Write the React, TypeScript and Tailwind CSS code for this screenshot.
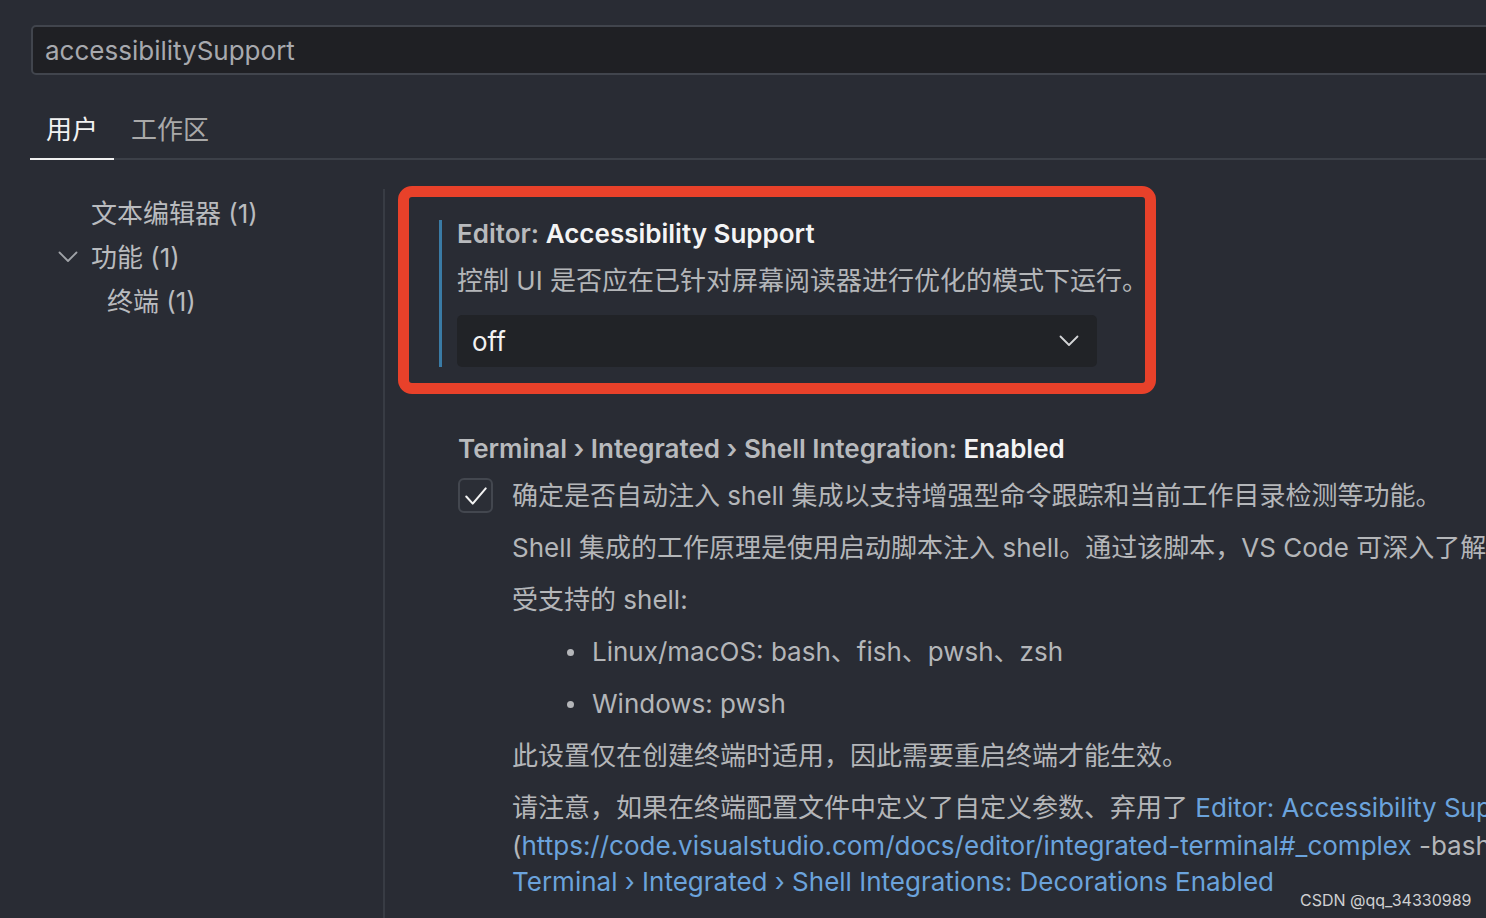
import React from 'react'

const FONT = 'font-["Inter","Noto_Sans_CJK_SC",sans-serif]'

function Chevron({ className }: { className?: string }) {
  return (
    <svg viewBox="0 0 20 12" fill="none" className={className}>
      <path d="M1.5 1.5 L10 10 L18.5 1.5" stroke="currentColor" strokeWidth="1.8" strokeLinecap="round" strokeLinejoin="round" />
    </svg>
  )
}

const TREE = [
  { label: '文本编辑器 (1)', pad: 'pl-[91px]', chevron: false },
  { label: '功能 (1)', pad: 'pl-[58px]', chevron: true },
  { label: '终端 (1)', pad: 'pl-[107px]', chevron: false }
]

export default function App() {
  return (
    <div className={`relative h-[918px] w-[1486px] overflow-hidden bg-[#292c34] ${FONT}`}>
      {/* Search */}
      <div className="pl-[31px] pt-[25px]">
        <div className="flex h-[50px] w-[1500px] items-center rounded-[5px] border-2 border-[#41454d] bg-[#1f2024] pl-[12px] text-[26px] text-[#a7a9ae]">
          accessibilitySupport
        </div>
      </div>

      {/* Tabs */}
      <div className="mt-[33px] flex pl-[30px]">
        <div className="flex h-[52px] w-[84px] items-center justify-center border-b-2 border-[#f0f0f0] pb-[8px] text-[26px] text-[#f2f2f2]">
          用户
        </div>
        <div className="flex h-[52px] flex-1 items-center border-b-2 border-[#3c4048] pb-[8px] pl-[17px] text-[26px] text-[#a9a9a9]">
          工作区
        </div>
      </div>

      <div className="flex">
        {/* Tree */}
        <div className="w-[383px] shrink-0 pt-[31px]">
          {TREE.map((item) => (
            <div key={item.label} className={`flex h-[44px] items-center ${item.pad} text-[26px] text-[#b9bbbe]`}>
              {item.chevron && <Chevron className="mr-[13px] h-[12px] w-[20px] text-[#a0a3a8]" />}
              {item.label}
            </div>
          ))}
        </div>

        {/* Settings list */}
        <div className="mt-[29px] h-[760px] border-l-2 border-[#383c44] pl-[13px]">
          <div className="-mt-[3px] w-[758px] rounded-[14px] border-[11px] border-[#e8412a] pb-[16px] pl-[30px] pt-[23px]">
            <div className="border-l-[3px] border-[#3a7ba5] pl-[15px]">
              <div className="text-[26px] font-semibold leading-[28px]">
                <span className="text-[#b8babd]">Editor: </span>
                <span className="text-[#f4f4f4]">Accessibility Support</span>
              </div>
              <div className="mt-[19px] whitespace-nowrap text-[26px] leading-[28px] text-[#b4b6b9]">
                控制 UI 是否应在已针对屏幕阅读器进行优化的模式下运行。
              </div>
              <div className="mt-[20px] flex h-[52px] w-[640px] items-center justify-between rounded-[5px] bg-[#212327] pl-[15px] pr-[18px] text-[26px] text-[#f2f2f2]">
                <span>off</span>
                <Chevron className="h-[12px] w-[20px] text-[#d4d5d7]" />
              </div>
            </div>
          </div>

          <div className="pl-[60px] pt-[41px]">
            <div className="whitespace-nowrap text-[26px] font-semibold leading-[28px]">
              <span className="text-[#b8babd]">Terminal › Integrated › Shell Integration: </span>
              <span className="text-[#f4f4f4]">Enabled</span>
            </div>
            <div className="mt-[14px] flex items-center">
              <div className="flex h-[35px] w-[35px] shrink-0 items-center justify-center rounded-[6px] border-2 border-[#43474f] bg-[#2b2e36]">
                <svg viewBox="0 0 24 24" fill="none" className="h-[26px] w-[26px]">
                  <path d="M3 12.5 L9 19 L21 5" stroke="#f2f2f2" strokeWidth="1.9" strokeLinecap="round" strokeLinejoin="round" />
                </svg>
              </div>
              <div className="ml-[19px] whitespace-nowrap text-[26px] leading-[37px] text-[#b4b6b9]">
                确定是否自动注入 shell 集成以支持增强型命令跟踪和当前工作目录检测等功能。
              </div>
            </div>
            <div className="pl-[54px] text-[26px] leading-[37px] text-[#b4b6b9]">
              <p className="mt-[15px] whitespace-nowrap">
                Shell 集成的工作原理是使用启动脚本注入 shell。通过该脚本，VS Code 可深入了解终端内部情况。
              </p>
              <p className="mt-[15px] whitespace-nowrap">受支持的 shell:</p>
              <ul className="pl-[80px]">
                <li className="relative mt-[15px] whitespace-nowrap">
                  <span className="absolute -left-[25px] top-[16px] h-[7px] w-[7px] rounded-full bg-[#b4b6b9]" />
                  Linux/macOS: bash、fish、pwsh、zsh
                </li>
                <li className="relative mt-[15px] whitespace-nowrap">
                  <span className="absolute -left-[25px] top-[16px] h-[7px] w-[7px] rounded-full bg-[#b4b6b9]" />
                  Windows: pwsh
                </li>
              </ul>
              <p className="mt-[15px] whitespace-nowrap">此设置仅在创建终端时适用，因此需要重启终端才能生效。</p>
              <div className="mt-[15px] whitespace-nowrap">
                <div className="leading-[38px]">
                  请注意，如果在终端配置文件中定义了自定义参数、弃用了{' '}
                  <span className="text-[#6ba3dc]">Editor: Accessibility Support</span> 或启用了
                </div>
                <div className="leading-[37px]">
                  (<span className="text-[#6ba3dc]">https://code.visualstudio.com/docs/editor/integrated-terminal#_complex</span>{' '}
                  -bash-profiles)，则自动注入可能会失败。
                </div>
                <div className="leading-[36px] text-[#6ba3dc]">Terminal › Integrated › Shell Integrations: Decorations Enabled</div>
              </div>
            </div>
          </div>
        </div>
      </div>

      {/* Watermark */}
      <div className="absolute left-[1300px] top-[888px] text-[16px] text-[#cfd0d2]">CSDN @qq_34330989</div>
    </div>
  )
}
